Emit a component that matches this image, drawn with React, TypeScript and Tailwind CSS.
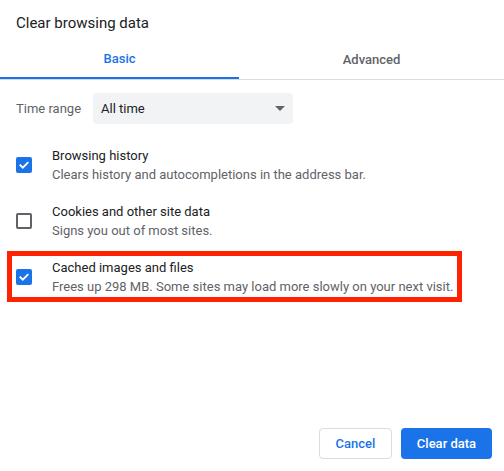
import React from 'react';

interface DataRowProps {
  title: string;
  description: string;
  checked: boolean;
  highlighted?: boolean;
}

const Checkbox: React.FC<{ checked: boolean }> = ({ checked }) =>
  checked ? (
    <div className="w-4 h-4 rounded-[2px] bg-[#1a73e8] flex items-center justify-center shrink-0">
      <svg width="12" height="12" viewBox="0 0 12 12" fill="none">
        <path d="M2.3 6.2l2.5 2.5 4.9-5" stroke="white" strokeWidth="1.8" strokeLinecap="square" />
      </svg>
    </div>
  ) : (
    <div className="w-4 h-4 rounded-[2px] border-2 border-[#5f6368] shrink-0" />
  );

const DataRow: React.FC<DataRowProps> = ({ title, description, checked, highlighted }) => (
  <div className="relative h-[56px] flex items-center px-4 gap-5">
    <Checkbox checked={checked} />
    <div className="text-[13px] leading-[19px]">
      <div className="text-[#202124]">{title}</div>
      <div className="text-[#5f6368]">{description}</div>
    </div>
    {highlighted && (
      <div className="absolute left-[7px] top-[2px] bottom-[3px] w-[455px] border-[5px] border-[#ff2200]" />
    )}
  </div>
);

export default function App() {
  return (
    <div className="w-[504px] h-[471px] bg-white flex flex-col font-['Roboto',sans-serif]">
      <div className="h-[40px] pt-[13px] px-4 text-[15px] leading-5 text-[#202124]">
        Clear browsing data
      </div>

      <div className="flex border-b border-[#dadce0]">
        <div className="w-[239px] h-[39px] flex items-center justify-center border-b-2 border-[#1a73e8] text-[13px] font-medium text-[#1a73e8]">
          Basic
        </div>
        <div className="flex-1 h-[39px] flex items-center justify-center text-[13px] font-medium text-[#5f6368]">
          Advanced
        </div>
      </div>

      <div className="mt-[13px] px-4 flex items-center gap-[11px]">
        <span className="text-[13px] text-[#5f6368] w-[66px]">Time range</span>
        <div className="w-[200px] h-[31px] rounded-[4px] bg-[#f1f3f4] flex items-center justify-between pl-2 pr-2">
          <span className="text-[13px] text-[#202124]">All time</span>
          <svg width="10" height="5" viewBox="0 0 10 5">
            <path d="M0 0h10L5 5z" fill="#5f6368" />
          </svg>
        </div>
      </div>

      <div className="mt-[13px] flex flex-col">
        <DataRow
          title="Browsing history"
          description="Clears history and autocompletions in the address bar."
          checked
        />
        <DataRow
          title="Cookies and other site data"
          description="Signs you out of most sites."
          checked={false}
        />
        <DataRow
          title="Cached images and files"
          description="Frees up 298 MB. Some sites may load more slowly on your next visit."
          checked
          highlighted
        />
      </div>

      <div className="mt-auto flex justify-end gap-[9px] pr-3 pb-3">
        <button className="w-[73px] h-[31px] rounded-[4px] border border-[#dadce0] bg-white text-[13px] font-medium text-[#1a73e8]">
          Cancel
        </button>
        <button className="w-[91px] h-[31px] rounded-[4px] bg-[#1a73e8] text-[13px] font-medium text-white">
          Clear data
        </button>
      </div>
    </div>
  );
}
